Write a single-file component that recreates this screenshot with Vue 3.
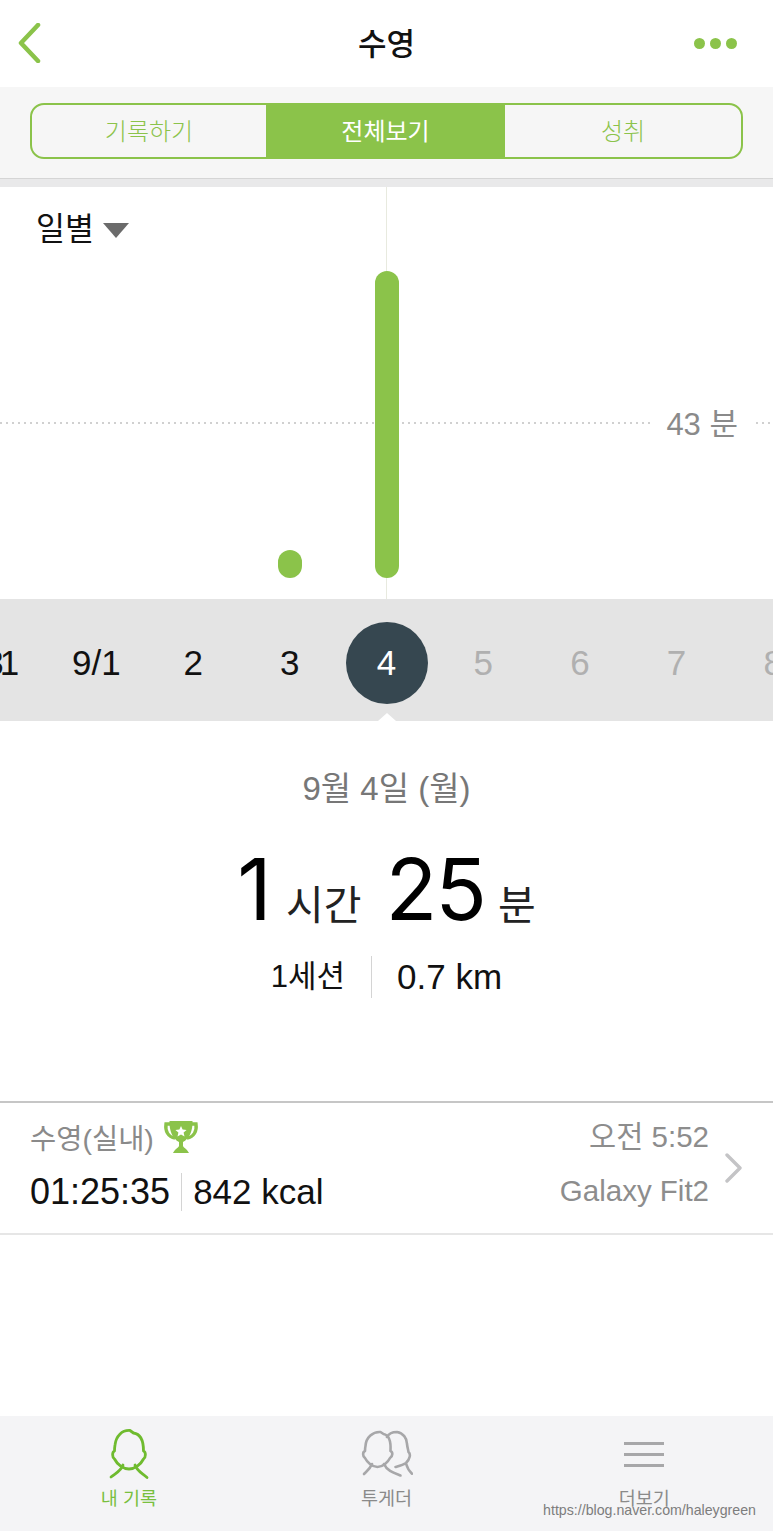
<template>
  <div class="page">
    <header class="top">
      <svg class="back" width="26" height="40" viewBox="0 0 26 40">
        <path d="M21 3 L4 21 L21 39" transform="translate(0 -1)" fill="none" stroke="#8bc34a" stroke-width="4.5" stroke-linecap="round" stroke-linejoin="round" />
      </svg>
      <h1>수영</h1>
      <div class="more"><i></i><i></i><i></i></div>
    </header>

    <div class="tabs-wrap">
      <div class="tabs">
        <div v-for="tab in tabs" :key="tab" class="tab" :class="{ on: tab === '전체보기' }">{{ tab }}</div>
      </div>
    </div>
    <div class="tabs-shadow"></div>

    <section class="chart">
      <div class="period">일별<span class="caret"></span></div>
      <div class="center-line"></div>
      <div class="guide"></div>
      <div class="guide-label">43 분</div>
      <div class="bar big"></div>
      <div class="bar dot"></div>
    </section>

    <section class="dates">
      <div v-for="d in days" :key="d.label" class="day" :class="d.kind">
        <span>{{ d.label }}</span>
      </div>
      <div class="notch"></div>
    </section>

    <section class="summary">
      <div class="date">9월 4일 (월)</div>
      <div class="time">
        <b>1</b><span class="unit first">시간</span><b>25</b><span class="unit">분</span>
      </div>
      <div class="meta">
        <span class="left">1세션</span>
        <span class="right">0.7 km</span>
      </div>
    </section>

    <section class="record">
      <div class="rec-left">
        <div class="rec-title">
          수영(실내)
          <svg width="36" height="34" viewBox="0 0 36 34">
            <path d="M8 4 H3 C2 11 5 17 12 18 M28 4 H33 C34 11 31 17 24 18" fill="none" stroke="#8bc34a" stroke-width="3.4" />
            <path d="M6.5 1 H29.5 C30 11 26 19 20 22 V26 C21 28 24 29 26 33 H10 C12 29 15 28 16 26 V22 C10 19 6 11 6.5 1 Z" fill="#8bc34a" />
            <path d="M18 6 L19.6 9.6 L23.6 10 L20.6 12.6 L21.5 16.4 L18 14.4 L14.5 16.4 L15.4 12.6 L12.4 10 L16.4 9.6 Z" fill="#fff" />
          </svg>
        </div>
        <div class="rec-stats">
          <span class="dur">01:25:35</span>
          <span class="kcal">842 kcal</span>
        </div>
      </div>
      <div class="rec-right">
        <div>오전 5:52</div>
        <div>Galaxy Fit2</div>
      </div>
      <svg class="chev" width="20" height="30" viewBox="0 0 20 30">
        <path d="M3 2 L16 15 L3 28" fill="none" stroke="#c4c4c6" stroke-width="3.4" stroke-linecap="round" stroke-linejoin="round" />
      </svg>
    </section>

    <div class="spacer"></div>

    <nav class="bottom">
      <div class="nav-item active">
        <svg width="42" height="54" viewBox="0 0 42 54" fill="none" stroke="#6fbb2f" stroke-width="2.8" stroke-linecap="round" stroke-linejoin="round">
          <path d="M22 3.5 C14 3 8 9 7 18 C6.5 21 6.5 22 6.5 24 C4 25 4 30 6.5 32 C9 37 15 42 21 42 C27 42 33 37 35.5 32 C38 30 38 25 35.5 24 C35.5 14 33 7 25.5 6 Z" />
          <path d="M15 38 C13 44 8 46 3 50 M27 38 C29 44 34 46 39 50.5" />
        </svg>
        <span>내 기록</span>
      </div>
      <div class="nav-item">
        <svg width="52" height="54" viewBox="0 0 52 54" fill="none" stroke="#a7a7a9" stroke-width="2.6" stroke-linecap="round" stroke-linejoin="round">
          <path d="M19.5 5 C12 4.5 5 10 4.5 19 C4 21 4 22 4 24 C1.5 25 1.5 29 4 31 C6 35 11 40 16.5 40 C22 40 27 35 29 31 C32 29 32 25 29.5 24 C30 15 28 8 22.5 7 Z" />
          <path d="M11 37 C9 42 6 44 3 47 M23 37 C26 44 33 46 39.5 48.5" />
          <path d="M26 10 C28 6 32 5 36 5 C42 6 46 11 46 17 C46.5 21 47 22 47.5 25 C50 27 49 32 45 36 C42 38 38 39 34.5 40 M45 36.5 C46 40 48 44 51 46.7" />
        </svg>
        <span>투게더</span>
      </div>
      <div class="nav-item">
        <div class="burger"><i></i><i></i><i></i></div>
        <span>더보기</span>
      </div>
      <div class="watermark">https://blog.naver.com/haleygreen</div>
    </nav>
  </div>
</template>

<script setup>
const tabs = ['기록하기', '전체보기', '성취'];

const days = [
  { label: '31', kind: 'edge' },
  { label: '9/1', kind: '' },
  { label: '2', kind: '' },
  { label: '3', kind: '' },
  { label: '4', kind: 'current' },
  { label: '5', kind: 'future' },
  { label: '6', kind: 'future' },
  { label: '7', kind: 'future' },
  { label: '8', kind: 'future' },
];
</script>

<style>
html, body {
  margin: 0;
  background: #fff;
}
</style>

<style scoped>
.page {
  width: 773px;
  height: 1531px;
  display: flex;
  flex-direction: column;
  overflow: hidden;
  font-family: "Liberation Sans", "Noto Sans CJK KR", sans-serif;
  color: #111;
  background: #fff;
}

.top {
  height: 87px;
  flex: none;
  display: grid;
  grid-template-columns: 1fr auto 1fr;
  align-items: center;
  padding: 0 36px 0 17px;
  box-sizing: border-box;
}

.top h1 {
  margin: 0 0 5px;
  padding-left: 19px;
  font-size: 31px;
  font-weight: 500;
  color: #111;
}

.back {
  margin-bottom: 2px;
}

.more {
  display: flex;
  gap: 5px;
  justify-content: flex-end;
}

.more i {
  width: 11px;
  height: 11px;
  border-radius: 50%;
  background: #8bc34a;
}

.tabs-wrap {
  height: 92px;
  flex: none;
  box-sizing: border-box;
  padding: 16px 30px 0;
  background: #f6f6f6;
  border-bottom: 1px solid #d5d5d5;
}

.tabs {
  height: 56px;
  box-sizing: border-box;
  display: grid;
  grid-template-columns: 234px 239px 1fr;
  border: 2px solid #8bc34a;
  border-radius: 14px;
  overflow: hidden;
}

.tab {
  display: flex;
  align-items: center;
  justify-content: center;
  padding-bottom: 4px;
  font-size: 24px;
  font-weight: 300;
  color: #8bc34a;
}

.tab.on {
  background: #8bc34a;
  color: #fff;
  font-weight: 400;
}

.tabs-shadow {
  height: 8px;
  flex: none;
  background: #e9e9ea;
}

.chart {
  position: relative;
  height: 412px;
  flex: none;
}

.period {
  position: absolute;
  left: 36px;
  top: 19px;
  display: flex;
  align-items: center;
  gap: 9px;
  font-size: 31.5px;
  font-weight: 400;
  line-height: 46px;
}

.caret {
  width: 0;
  height: 0;
  margin-top: 3px;
  border-left: 13px solid transparent;
  border-right: 13px solid transparent;
  border-top: 15px solid #6b6b6b;
}

.center-line {
  position: absolute;
  left: 386px;
  top: 0;
  bottom: 0;
  width: 1px;
  background: #e8eadf;
}

.guide {
  position: absolute;
  left: 0;
  right: 0;
  top: 235px;
  height: 2px;
  background: repeating-linear-gradient(to right, #d0d0d0 0, #d0d0d0 2px, transparent 2px, transparent 6px);
}

.guide-label {
  position: absolute;
  right: 18px;
  top: 218px;
  padding: 0 17px 0 13px;
  background: #fff;
  font-size: 31px;
  line-height: 40px;
  color: #8a8a8a;
}

.bar {
  position: absolute;
  background: #8bc34a;
  width: 24px;
  border-radius: 12px;
}

.bar.big {
  left: 375px;
  top: 84px;
  height: 307px;
}

.bar.dot {
  left: 278px;
  top: 363px;
  height: 28px;
}

.dates {
  position: relative;
  height: 122px;
  flex: none;
  box-sizing: border-box;
  padding-top: 6px;
  display: flex;
  justify-content: center;
  align-items: center;
  background: #e4e4e4;
}

.day {
  flex: none;
  width: 96.7px;
  display: flex;
  justify-content: center;
  font-size: 35px;
  color: #111;
}

.day.edge {
  letter-spacing: -4px;
}

.day.future {
  color: #b0b0b0;
}

.day.current span {
  width: 82px;
  height: 82px;
  border-radius: 50%;
  background: #364750;
  color: #fff;
  display: flex;
  align-items: center;
  justify-content: center;
}

.notch {
  position: absolute;
  left: 378px;
  bottom: 0;
  border-left: 9px solid transparent;
  border-right: 9px solid transparent;
  border-bottom: 8px solid #fff;
}

.summary {
  height: 380px;
  flex: none;
  box-sizing: border-box;
  padding-top: 46px;
  display: flex;
  flex-direction: column;
  align-items: center;
}

.date {
  font-size: 33px;
  line-height: 44px;
  color: #777;
}

.time {
  display: flex;
  align-items: baseline;
  margin-top: 25px;
  margin-bottom: 2px;
  height: 108px;
  line-height: 108px;
}

.time b {
  font-family: Inter, "Liberation Sans", sans-serif;
  font-weight: 400;
  font-size: 85px;
  letter-spacing: -2px;
  color: #000;
}

.unit {
  font-size: 41px;
  font-weight: 400;
  margin-left: 13px;
  color: #222;
}

.unit.first {
  margin-left: 16px;
  margin-right: 24px;
}

.meta {
  display: flex;
  align-items: center;
  margin-top: 10px;
  line-height: 42px;
}

.meta .left {
  font-size: 31px;
  padding-right: 26px;
  border-right: 1px solid #d4d4d4;
}

.meta .right {
  font-size: 35px;
  padding-left: 25px;
}

.record {
  height: 134px;
  flex: none;
  box-sizing: border-box;
  display: flex;
  align-items: center;
  padding: 0 29px 0 30px;
  border-top: 2px solid #c6c6c6;
  border-bottom: 2px solid #e6e6e6;
}

.rec-left {
  flex: 1;
  margin-bottom: 7px;
}

.rec-title {
  display: flex;
  align-items: center;
  gap: 9px;
  height: 36px;
  font-size: 28.5px;
  color: #8a8a8a;
}

.rec-stats {
  display: flex;
  align-items: center;
  margin-top: 18px;
  font-size: 36px;
  line-height: 38px;
  color: #111;
}

.dur {
  padding-right: 11px;
  margin-right: 11px;
  border-right: 1px solid #d4d4d4;
}

.kcal {
  font-size: 35px;
}

.rec-right {
  text-align: right;
  font-size: 29.5px;
  color: #8d8d8d;
  display: flex;
  flex-direction: column;
  gap: 13px;
  line-height: 41px;
  margin-right: 15px;
  margin-bottom: 10px;
}

.spacer {
  flex: 1;
}

.bottom {
  position: relative;
  height: 115px;
  flex: none;
  display: flex;
  background: #f4f4f6;
}

.nav-item {
  flex: 1;
  display: flex;
  flex-direction: column;
  align-items: center;
  padding-top: 11px;
  font-size: 18.5px;
  color: #8a8a8a;
}

.nav-item svg {
  height: 54px;
}

.nav-item span {
  margin-top: 4px;
  line-height: 28px;
}

.nav-item.active {
  color: #79bf3e;
}

.burger {
  height: 54px;
  display: flex;
  flex-direction: column;
  justify-content: center;
  gap: 8px;
}

.burger i {
  display: block;
  width: 40px;
  height: 3px;
  background: #a7a7a9;
}

.watermark {
  position: absolute;
  right: 17px;
  top: 86px;
  font-size: 14.2px;
  color: #7d7d7d;
}
</style>
